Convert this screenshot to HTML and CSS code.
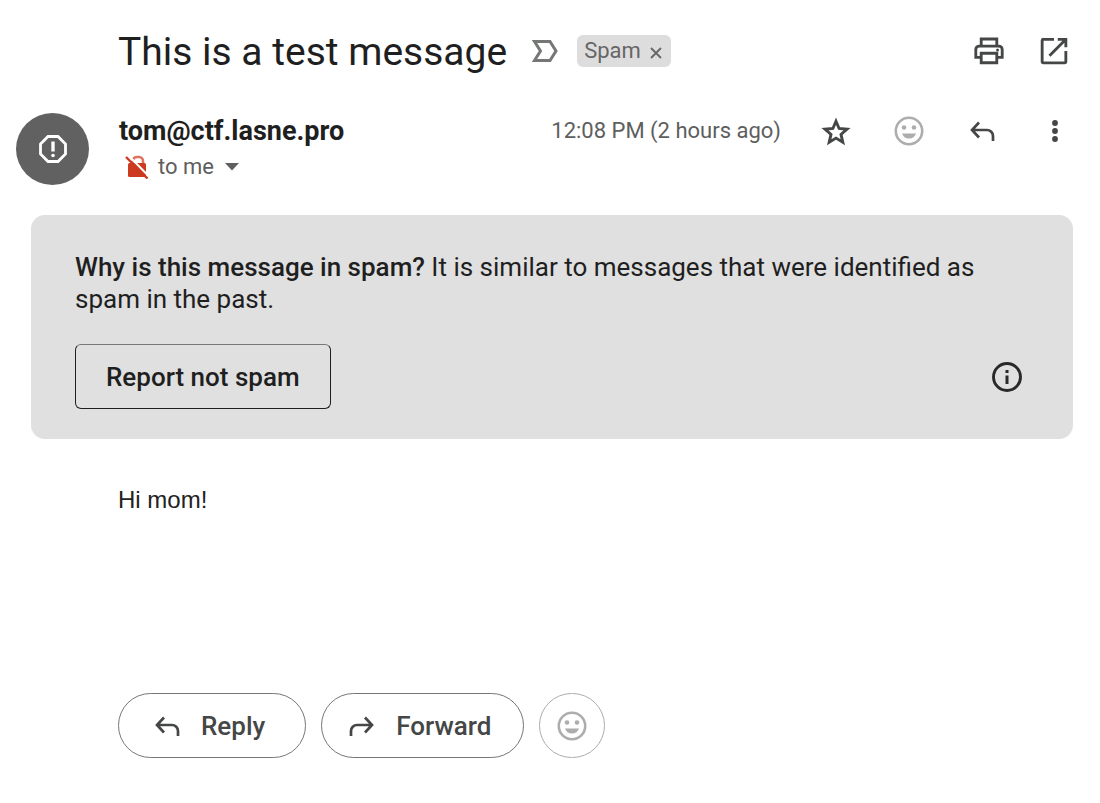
FILE: index.html
```html
<!DOCTYPE html>
<html lang="en">
<head>
<meta charset="utf-8">
<meta name="viewport" content="width=device-width, initial-scale=1">
<title>This is a test message</title>
<link rel="stylesheet" href="styles.css">
</head>
<body>
<svg class="sprite" aria-hidden="true">
  <symbol id="reply" viewBox="0 0 36 36"><path d="M15 9.500L8 17l7 7.500M8 17h15a6 6 0 0 1 6 6v5" fill="none" stroke="currentColor" stroke-width="2.700"/></symbol>
  <symbol id="smile" viewBox="0 0 36 36"><circle cx="18" cy="18" r="13.200" fill="none" stroke="currentColor" stroke-width="2.600"/><circle cx="13" cy="14.500" r="2.300" fill="currentColor"/><circle cx="23" cy="14.500" r="2.300" fill="currentColor"/><path d="M11 20.500h14c-1 3-3.500 5-7 5s-6-2-7-5z" fill="currentColor"/></symbol>
</svg>
<main class="message">
  <header class="subject">
    <h1 class="title">This is a test message</h1>
    <svg class="marker" viewBox="0 0 28 24" aria-hidden="true"><path d="M3.500 2.500h15.500l6 9.500-6 9.500H3.500l6-9.500z" fill="none" stroke="currentColor" stroke-width="3"/></svg>
    <span class="label">Spam
      <button class="label-remove" type="button" aria-label="Remove label Spam"><svg viewBox="0 0 14 14"><path d="M2 2l10 10M12 2L2 12" stroke="currentColor" stroke-width="1.800"/></svg></button>
    </span>
    <div class="subject-tools">
      <button class="icon-button" type="button" aria-label="Print all"><svg viewBox="0 0 24 24"><path d="M6.800 8V4h10.400v4M6.800 16.200H3.200V11a2.300 2.300 0 0 1 2.300-2.300h13a2.300 2.300 0 0 1 2.300 2.300v5.200h-3.600M6.800 13.500h10.400V19.800H6.800z" fill="none" stroke="currentColor" stroke-width="1.900"/><circle cx="17.700" cy="11.400" r="1" fill="currentColor"/></svg></button>
      <button class="icon-button" type="button" aria-label="In new window"><svg viewBox="0 0 24 24"><path d="M12 4.200H5A.9.9 0 0 0 4.100 5v14a.9.9 0 0 0 .9.900h14a.9.900 0 0 0 .9-.900v-7M14.500 4.200h5.400v5.300M19.600 4.500L9 15.100" fill="none" stroke="currentColor" stroke-width="1.900"/></svg></button>
    </div>
  </header>

  <section class="sender">
    <div class="avatar"><svg viewBox="0 0 30 30" aria-hidden="true"><path d="M10 2.500h10l7.500 7.500v10L20 27.500H10L2.500 20V10z" fill="none" stroke="currentColor" stroke-width="2.800"/><path d="M15 7.500v10" stroke="currentColor" stroke-width="3.400"/><circle cx="15" cy="21.500" r="1.800" fill="currentColor"/></svg></div>
    <div class="identity">
      <strong class="address">tom@ctf.lasne.pro</strong>
      <div class="recipient">
        <svg class="lock" viewBox="0 0 24 24" aria-hidden="true"><path d="M8 8V5.500a4 4 0 0 1 4-3.500h2a4 4 0 0 1 4 4V9" fill="none" stroke="#e0735f" stroke-width="2.600"/><rect x="3" y="8" width="18" height="14" rx="1.500" fill="#cc3a20"/><path d="M3 0l21 21.500" stroke="#fff" stroke-width="2"/><path d="M1 2L22.500 23.500" stroke="#cc3a20" stroke-width="2.400"/></svg>
        <span>to me</span>
        <button class="details" type="button" aria-label="Show details"><svg viewBox="0 0 14 8"><path d="M0 0h14L7 7.500z" fill="currentColor"/></svg></button>
      </div>
    </div>
    <time class="time">12:08 PM (2 hours ago)</time>
    <div class="sender-tools">
      <button class="icon-button" type="button" aria-label="Star"><svg viewBox="0 0 36 36"><path d="M18 8.200l3.100 7.300 7.900.700-6 5.200 1.800 7.800-6.800-4.100-6.800 4.100 1.800-7.800-6-5.200 7.900-.700z" fill="none" stroke="currentColor" stroke-width="2.900"/></svg></button>
      <button class="icon-button muted" type="button" aria-label="Add reaction"><svg><use href="#smile"/></svg></button>
      <button class="icon-button" type="button" aria-label="Reply"><svg><use href="#reply"/></svg></button>
      <button class="icon-button" type="button" aria-label="More"><svg viewBox="0 0 36 36" fill="currentColor"><circle cx="18" cy="10" r="2.900"/><circle cx="18" cy="18" r="2.900"/><circle cx="18" cy="26" r="2.900"/></svg></button>
    </div>
  </section>

  <section class="notice">
    <p class="reason"><strong>Why is this message in spam?</strong> It is similar to messages that were identified as spam in the past.</p>
    <div class="notice-actions">
      <button class="report" type="button">Report not spam</button>
      <button class="icon-button info" type="button" aria-label="Learn more"><svg viewBox="0 0 36 36"><circle cx="18" cy="18" r="13.500" fill="none" stroke="currentColor" stroke-width="2.900"/><path d="M18 16.500v8.500M18 11v3" stroke="currentColor" stroke-width="3"/></svg></button>
    </div>
  </section>

  <p class="body">Hi mom!</p>

  <footer class="actions">
    <button class="pill" type="button"><svg><use href="#reply"/></svg>Reply</button>
    <button class="pill forward" type="button"><svg class="flip"><use href="#reply"/></svg>Forward</button>
    <button class="pill react" type="button" aria-label="Add reaction"><svg><use href="#smile"/></svg></button>
  </footer>
</main>
</body>
</html>
```
FILE: styles.css
```css
* { box-sizing: border-box; }
body { margin: 0; background: #fff; color: #1f1f1f; font-family: Roboto, "Open Sans", sans-serif; }
button { margin: 0; padding: 0; border: 0; background: none; color: inherit; font: inherit; cursor: pointer; }
svg { display: block; flex: none; }
.sprite { width: 0; height: 0; position: absolute; }
.message { padding: 27px 28px 45px 16px; }
.subject { display: flex; align-items: center; min-height: 48px; padding-left: 102px; }
.title { margin: 0; padding-top: 2px; font-size: 39px; line-height: 46px; font-weight: 400; }
.marker { width: 28px; height: 24px; margin-left: 24px; color: #757775; }
.label { display: flex; align-items: center; gap: 8px; height: 32px; margin-left: 18px; padding: 0 8px 0 7px; border-radius: 6px; background: #ddd; color: #666; font-size: 22px; line-height: 32px; }
.label-remove svg { width: 14px; height: 14px; margin-top: 3px; }
.subject-tools { display: flex; gap: 29px; margin-left: auto; }
.icon-button { display: block; width: 36px; height: 36px; color: #444746; }
.icon-button svg { width: 36px; height: 36px; }
.icon-button.muted { color: #adadad; }
.sender { display: flex; align-items: flex-start; padding-top: 38px; }
.avatar { display: flex; flex: none; align-items: center; justify-content: center; width: 73px; height: 72px; border-radius: 50%; background: #616161; color: #fff; }
.avatar svg { width: 30px; height: 30px; }
.identity { margin-left: 30px; }
.address { display: block; font-size: 27px; line-height: 36px; font-weight: 700; }
.recipient { display: flex; align-items: center; padding-left: 6px; color: #5e5e5e; font-size: 22px; line-height: 36px; }
.lock { width: 24px; height: 24px; margin-right: 9px; }
.details { margin-left: 11px; }
.details svg { width: 14px; height: 8px; }
.time { margin-left: auto; color: #5e5e5e; font-size: 22px; line-height: 36px; }
.sender-tools { display: flex; gap: 37px; margin: 0 -1px 0 37px; }
.notice { margin: 30px -1px 0 15px; padding: 36px 48px 30px 44px; border-radius: 14px; background: #e0e0e0; }
.reason { margin: 0; font-size: 26px; line-height: 32px; }
.reason strong { font-weight: 500; }
.notice-actions { display: flex; align-items: center; justify-content: space-between; margin-top: 29px; }
.report { height: 65px; padding: 0 30px; border: 1px solid #1f1f1f; border-top-color: #777; border-radius: 6px; font-size: 26px; font-weight: 500; }
.info { color: #292929; }
.body { min-height: 178px; margin: 45px 0 0 102px; font: 24px/32px "Liberation Sans", Arial, sans-serif; color: #222; }
.actions { display: flex; gap: 15px; margin: 31px 0 0 102px; }
.pill { display: flex; align-items: center; gap: 16px; height: 65px; padding: 0 40px 0 30px; border: 1px solid #747775; border-radius: 33px; color: #444746; font-size: 26px; font-weight: 500; }
.pill svg { width: 36px; height: 36px; }
.forward { padding: 0 32px 0 22px; }
.flip { transform: scaleX(-1); }
.react { justify-content: center; width: 66px; padding: 0; border-color: #adadad; color: #adadad; }
```
